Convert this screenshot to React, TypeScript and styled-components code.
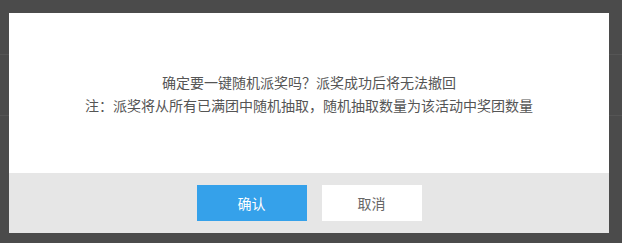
import React from 'react'
import styled, { createGlobalStyle } from 'styled-components'

const GlobalStyle = createGlobalStyle`
    html, body {
        margin: 0;
        padding: 0;
        height: 100%;
    }
    body {
        background-color: #4b4b4b;
        background-image: linear-gradient(
            to bottom,
            transparent 54px,
            #555555 54px,
            #555555 55px,
            transparent 55px,
            transparent 115px,
            #555555 115px,
            #555555 116px,
            transparent 116px
        );
        font-family: "Microsoft YaHei", "Noto Sans CJK SC", sans-serif;
    }
`

const Overlay = styled.div`
    display: flex;
    justify-content: flex-start;
    padding: 13px 0 0 9px;
`

const Dialog = styled.div`
    width: 600px;
    height: 220px;
    display: flex;
    flex-direction: column;
    background: #fff;
`

const Body = styled.div`
    flex: 1;
    display: flex;
    flex-direction: column;
    align-items: center;
    justify-content: center;
    padding-top: 2px;
`

const Line = styled.p`
    margin: 0;
    font-size: 14px;
    line-height: 23px;
    color: #555;
    text-align: center;
`

const Footer = styled.div`
    height: 60px;
    display: flex;
    align-items: center;
    justify-content: center;
    gap: 15px;
    background: #e6e6e6;
`

const Button = styled.button<{ $primary?: boolean; $width: number }>`
    width: ${p => p.$width}px;
    height: 36px;
    border: none;
    padding: 0;
    font-family: inherit;
    font-size: 14px;
    cursor: pointer;
    background: ${p => (p.$primary ? '#35a1ea' : '#fff')};
    color: ${p => (p.$primary ? '#fff' : '#666')};
`

const App = () => {
    return (
        <>
            <GlobalStyle />
            <Overlay>
                <Dialog>
                    <Body>
                        <Line>确定要一键随机派奖吗？派奖成功后将无法撤回</Line>
                        <Line>注：派奖将从所有已满团中随机抽取，随机抽取数量为该活动中奖团数量</Line>
                    </Body>
                    <Footer>
                        <Button $primary $width={110} type="button">确认</Button>
                        <Button $width={100} type="button">取消</Button>
                    </Footer>
                </Dialog>
            </Overlay>
        </>
    )
}

export default App
